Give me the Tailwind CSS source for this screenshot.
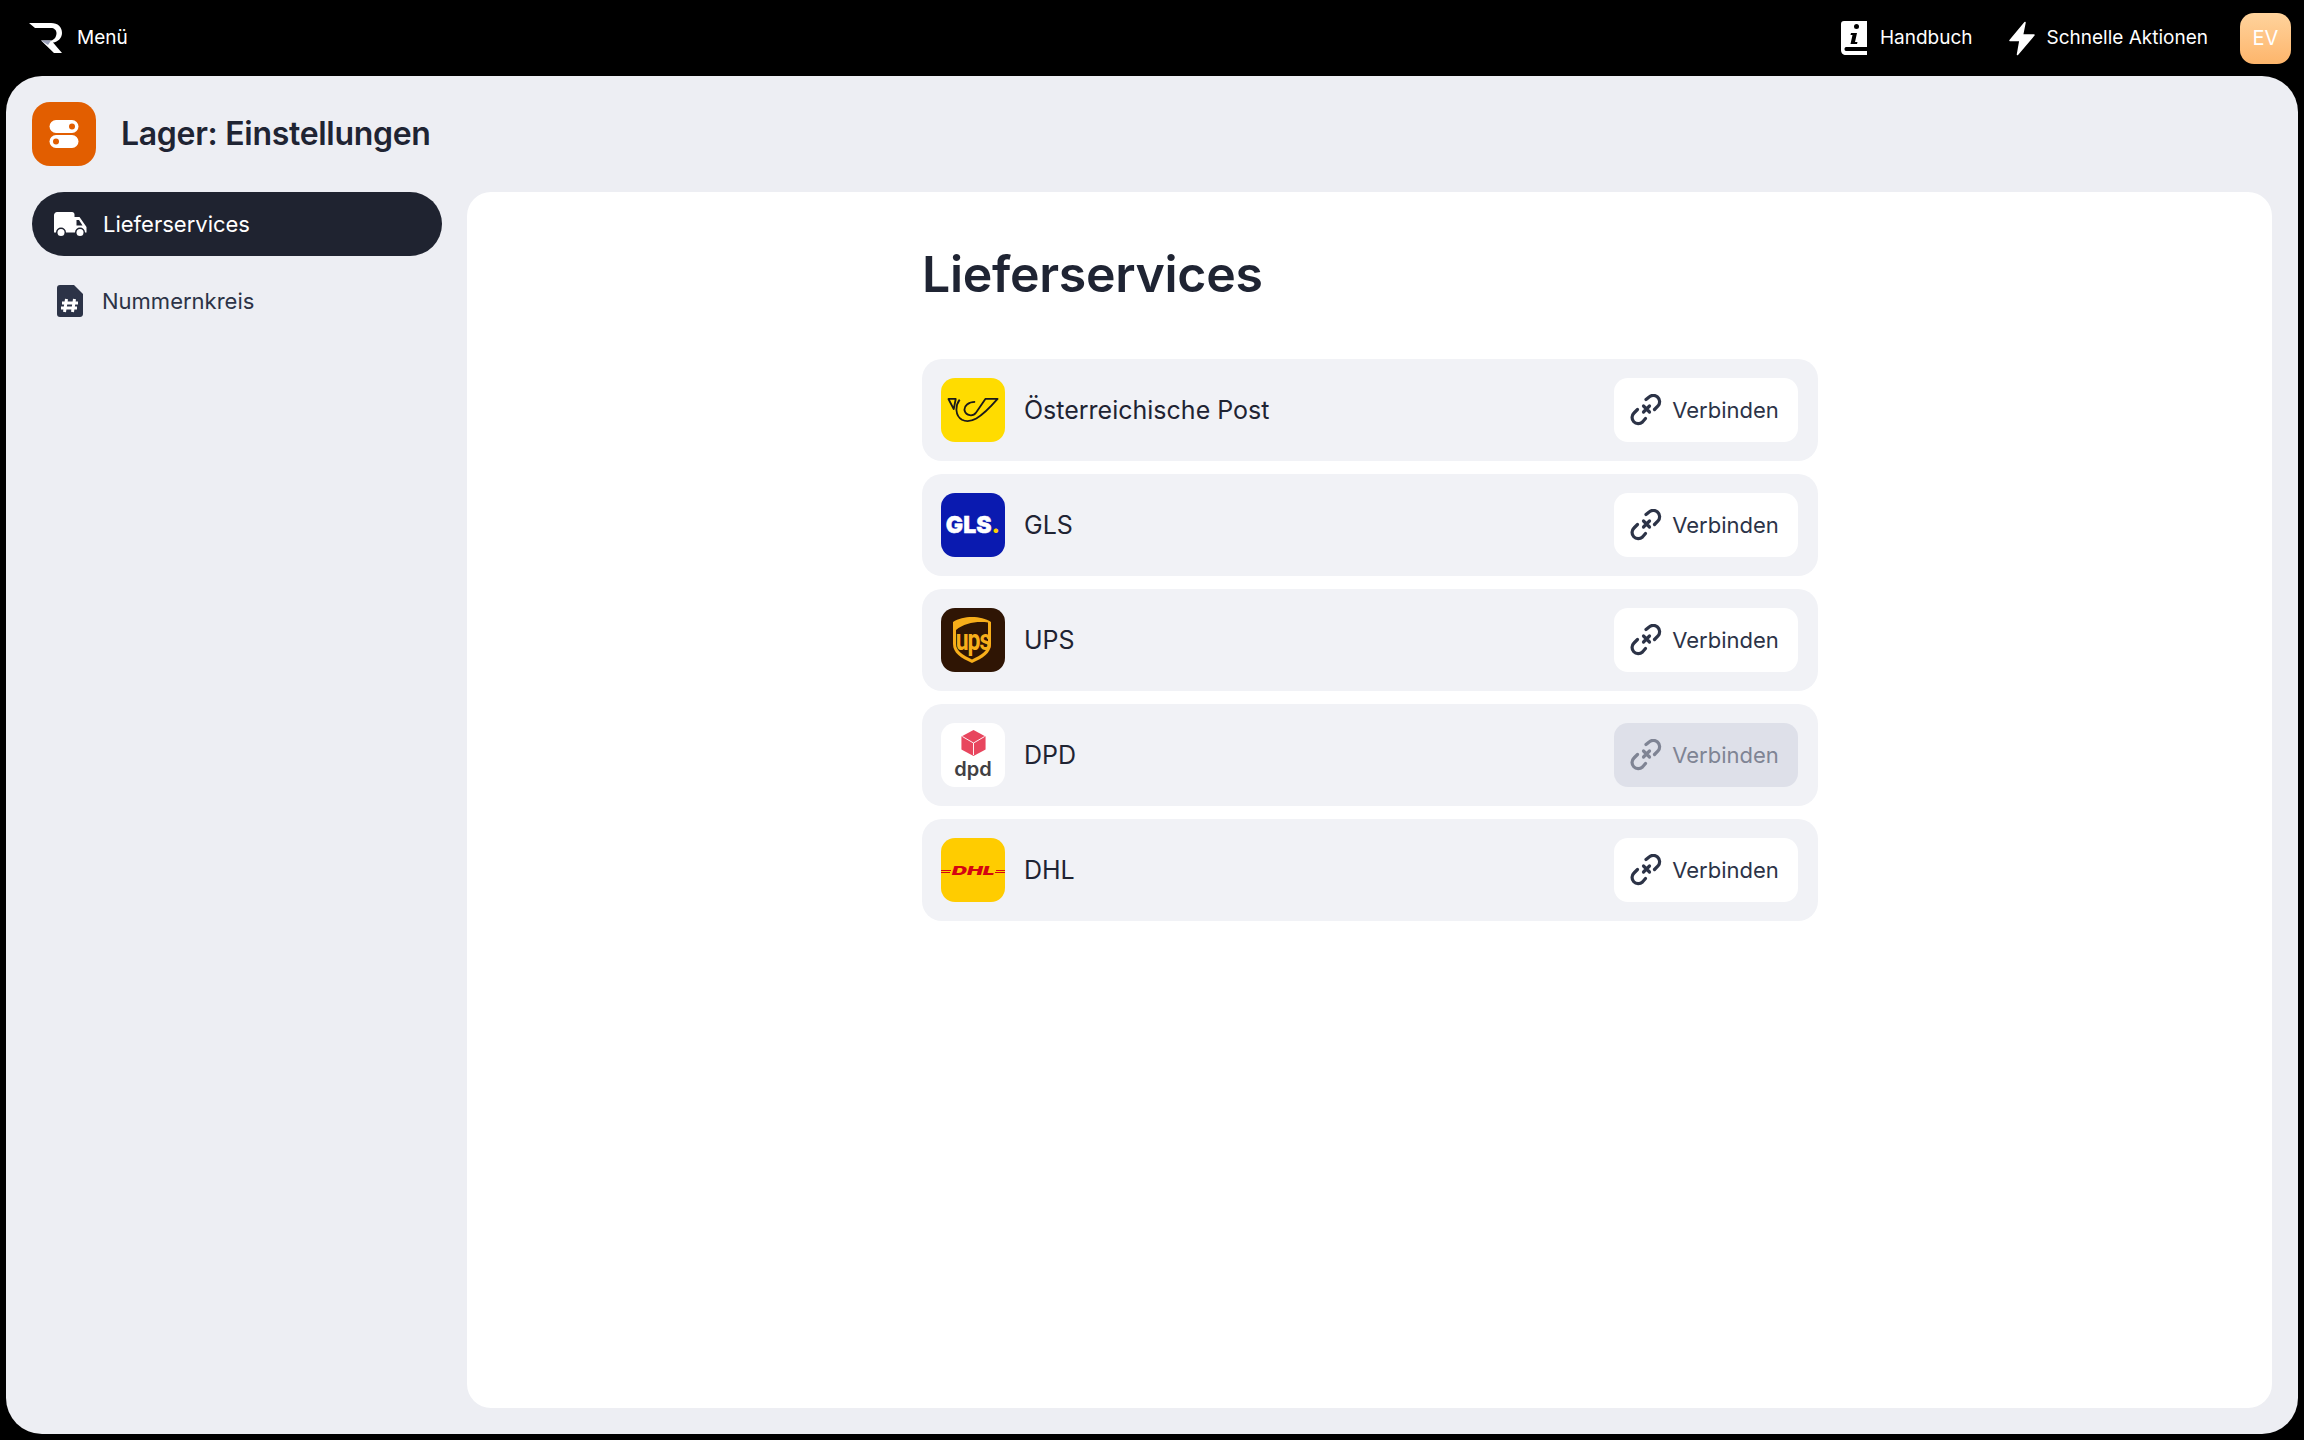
<!DOCTYPE html>
<html lang="de">
<head>
  <meta charset="UTF-8" />
  <title>Lager: Einstellungen</title>
  <script src="https://cdn.jsdelivr.net/npm/@tailwindcss/browser@4"></script>
</head>
<body class="bg-black h-screen flex flex-col font-['Inter',sans-serif] text-[#1f2433] overflow-hidden">

  <!-- top bar -->
  <header class="h-[76px] shrink-0 flex items-center justify-between pl-[29px] pr-[13px] text-white text-[19px]">
    <div class="flex items-center gap-[15px]">
      <svg class="w-[33px] h-[32px]" viewBox="0 0 33 32">
        <path d="M0 1H22C29 1 33 5 33 11C33 16 29 20 24 20.500L33 31H25L12 18.500H22C25.500 18 27.500 14.500 27.500 11C27.500 8 25 6 22 6H6Z" fill="#fff"/>
        <path d="M12 18.500H22L19 23Z" fill="#9aa0b8"/>
      </svg>
      <span class="mt-[1px]">Menü</span>
    </div>
    <div class="flex items-center">
      <svg class="w-[26px] h-[34px] mr-[13px]" viewBox="0 0 26 34">
        <path d="M3 0H26V26H5C3 26 3 30 5 30H26V34H5C2 34 0 32 0 29V3C0 1 1 0 3 0Z" fill="#fff"/>
        <circle cx="15.500" cy="5.500" r="2.500" fill="#000"/>
        <path d="M10 12H16L14 21H16.500L16 23H9.500L11.500 14H9.500Z" fill="#000"/>
      </svg>
      <span class="mt-[1px]">Handbuch</span>
      <svg class="w-[26px] h-[35px] ml-[36px] mr-[12px]" viewBox="0 0 26 35">
        <path d="M16 1.500L1 19.500H11L8.500 33.500L25 14H13.500Z" fill="#fff" stroke="#fff" stroke-width="1.500" stroke-linejoin="round"/>
      </svg>
      <span class="mt-[1px]">Schnelle Aktionen</span>
      <div class="ml-[32px] w-[51px] h-[51px] rounded-[14px] bg-gradient-to-b from-[#ffd39c] to-[#fdb56b] flex items-center justify-center text-[20px]">EV</div>
    </div>
  </header>

  <div class="flex-1 min-h-0 mx-[6px] mb-[6px] rounded-[36px] bg-[#edeef3] p-[26px] flex flex-col">
    <div class="flex items-center gap-[25px] h-[64px] shrink-0">
      <div class="w-[64px] h-[64px] rounded-[18px] bg-[#e25e00] flex items-center justify-center">
        <svg class="w-[30px] h-[30px]" viewBox="0 0 30 30">
          <rect x="0.500" y="1" width="29" height="13" rx="6.500" fill="#fff"/>
          <rect x="0.500" y="16" width="29" height="13" rx="6.500" fill="#fff"/>
          <circle cx="23" cy="7.500" r="3" fill="#e25e00"/>
          <circle cx="7" cy="22.500" r="3" fill="#e25e00"/>
        </svg>
      </div>
      <h1 class="text-[32px] font-semibold tracking-[-0.3px]">Lager: Einstellungen</h1>
    </div>

    <div class="flex-1 min-h-0 mt-[26px] flex gap-[25px]">
      <!-- sidebar -->
      <nav class="w-[410px] shrink-0 flex flex-col gap-[13px] text-[22px]">
        <a class="h-[64px] rounded-full bg-[#1f2330] text-white flex items-center pl-[22px]">
          <svg class="w-[33px] h-[25px] mr-[16px]" viewBox="0 0 33 25">
            <path d="M3 0H18C19.500 0 20.500 1 20.500 2.500V5H25.500L32.500 15V20.500H31A5 5 0 0 0 21 20.500H12A5 5 0 0 0 2 20.500H0V3C0 1.500 1.500 0 3 0Z" fill="#fff"/>
            <path d="M22.500 8H25L28.500 13.500H22.500Z" fill="#1f2330"/>
            <circle cx="7" cy="20.500" r="3.500" fill="#fff"/>
            <circle cx="26" cy="20.500" r="3.500" fill="#fff"/>
          </svg>
          <span>Lieferservices</span>
        </a>
        <a class="h-[64px] flex items-center pl-[25px]">
          <svg class="w-[26px] h-[32px] mr-[19px]" viewBox="0 0 26 32">
            <path d="M3 0H17L26 9V29C26 31 24.500 32 23 32H3C1 32 0 31 0 29V3C0 1 1 0 3 0Z" fill="#2c3347"/>
            <path d="M9.500 14L7.500 27M17.500 14L15.500 27M5 18H21M4 23H20" stroke="#fff" stroke-width="3" fill="none"/>
          </svg>
          <span class="text-[#2c3347]">Nummernkreis</span>
        </a>
      </nav>

      <!-- content card -->
      <main class="flex-1 min-w-0 rounded-[24px] bg-white pl-[455px]">
        <div class="w-[896px]">
          <h2 class="text-[50px] font-semibold leading-[64px] mt-[50px] mb-[53px] tracking-[-0.3px]">Lieferservices</h2>
          <div class="flex flex-col gap-[13px]">

            <div class="h-[102px] rounded-[20px] bg-[#f1f2f6] flex items-center pl-[19px] pr-[20px]">
              <div class="w-[64px] h-[64px] rounded-[14px] bg-[#ffdc00] flex items-center justify-center">
                <svg class="w-[53px] h-[28px]" viewBox="80 120 160 85" fill="none" stroke="#1a1a1a" stroke-width="5.500" stroke-linejoin="round">
                  <path d="M84 129H106L100 160Z"/>
                  <path d="M118 131C104 150 104 180 125 192C150 205 180 190 233 129H196L168 170C158 184 138 180 133 165C130 150 145 138 165 138"/>
                </svg>
              </div>
              <span class="ml-[19px] mt-[1px] text-[25px]">Österreichische Post</span>
              <button class="ml-auto w-[184px] h-[64px] pr-[3px] rounded-[14px] bg-white flex items-center justify-center gap-[10px] text-[22px] text-[#2c3347]">
                <svg class="w-[32px] h-[32px]" viewBox="0 0 32 32" fill="none" stroke="#2c3347" stroke-width="3.200" stroke-linecap="round">
                  <path d="M16 5.500L18.500 3.500A6 6 0 0 1 28 12L24.500 15.500"/>
                  <path d="M7.500 15.500L4 19A6 6 0 0 0 12.500 28L15.500 24.500"/>
                  <path d="M13.500 12L19.500 18M19.500 12L13.500 18"/>
                </svg>
                Verbinden
              </button>
            </div>

            <div class="h-[102px] rounded-[20px] bg-[#f1f2f6] flex items-center pl-[19px] pr-[20px]">
              <div class="w-[64px] h-[64px] rounded-[14px] bg-[#0a1ab0] flex items-center justify-center text-white text-[23px] font-black [-webkit-text-stroke:0.4px_white]">GLS<span class="text-[#ffd200] [-webkit-text-stroke:0px]">.</span></div>
              <span class="ml-[19px] mt-[1px] text-[25px]">GLS</span>
              <button class="ml-auto w-[184px] h-[64px] pr-[3px] rounded-[14px] bg-white flex items-center justify-center gap-[10px] text-[22px] text-[#2c3347]">
                <svg class="w-[32px] h-[32px]" viewBox="0 0 32 32" fill="none" stroke="#2c3347" stroke-width="3.200" stroke-linecap="round">
                  <path d="M16 5.500L18.500 3.500A6 6 0 0 1 28 12L24.500 15.500"/>
                  <path d="M7.500 15.500L4 19A6 6 0 0 0 12.500 28L15.500 24.500"/>
                  <path d="M13.500 12L19.500 18M19.500 12L13.500 18"/>
                </svg>
                Verbinden
              </button>
            </div>

            <div class="h-[102px] rounded-[20px] bg-[#f1f2f6] flex items-center pl-[19px] pr-[20px]">
              <div class="relative w-[64px] h-[64px] rounded-[14px] bg-[#2f1504] flex items-center justify-center">
                <svg class="absolute left-[12px] top-[9px] w-[38px] h-[46px]" viewBox="0 0 38 46">
                  <path d="M19 0C12 0 5 1.500 0 5V27C0 36 8 41 19 46C30 41 38 36 38 27V5C33 1.500 26 0 19 0Z" fill="#f7ae1a"/>
                  <path d="M3 13C11 6 24 4 35 5.500V27C35 34 28 38 19 42.500C10 38 3 34 3 27Z" fill="#2f1504"/>
                </svg>
                <span class="relative mt-[2px] text-[#f7ae1a] text-[23px] leading-[20px] font-bold tracking-[-1px] scale-y-[1.3] font-['Roboto',sans-serif]">ups</span>
              </div>
              <span class="ml-[19px] mt-[1px] text-[25px]">UPS</span>
              <button class="ml-auto w-[184px] h-[64px] pr-[3px] rounded-[14px] bg-white flex items-center justify-center gap-[10px] text-[22px] text-[#2c3347]">
                <svg class="w-[32px] h-[32px]" viewBox="0 0 32 32" fill="none" stroke="#2c3347" stroke-width="3.200" stroke-linecap="round">
                  <path d="M16 5.500L18.500 3.500A6 6 0 0 1 28 12L24.500 15.500"/>
                  <path d="M7.500 15.500L4 19A6 6 0 0 0 12.500 28L15.500 24.500"/>
                  <path d="M13.500 12L19.500 18M19.500 12L13.500 18"/>
                </svg>
                Verbinden
              </button>
            </div>

            <div class="h-[102px] rounded-[20px] bg-[#f1f2f6] flex items-center pl-[19px] pr-[20px]">
              <div class="w-[64px] h-[64px] rounded-[14px] bg-white flex flex-col items-center pt-[7px]">
                <svg class="w-[25px] h-[26px]" viewBox="0 0 26 28">
                  <path d="M13 0L26 7V21L13 28L0 21V7Z" fill="#e8465e"/>
                  <path d="M1 7L13 14V27M25 7L13 14" fill="none" stroke="#fff" stroke-width="1"/>
                </svg>
                <span class="text-[#414042] text-[20px] font-semibold leading-[20px] mt-[3px]">dpd</span>
              </div>
              <span class="ml-[19px] mt-[1px] text-[25px]">DPD</span>
              <button class="ml-auto w-[184px] h-[64px] pr-[3px] rounded-[14px] bg-[#dee0e9] flex items-center justify-center gap-[10px] text-[22px] text-[#7f8494]" disabled>
                <svg class="w-[32px] h-[32px]" viewBox="0 0 32 32" fill="none" stroke="#7f8494" stroke-width="3.200" stroke-linecap="round">
                  <path d="M16 5.500L18.500 3.500A6 6 0 0 1 28 12L24.500 15.500"/>
                  <path d="M7.500 15.500L4 19A6 6 0 0 0 12.500 28L15.500 24.500"/>
                  <path d="M13.500 12L19.500 18M19.500 12L13.500 18"/>
                </svg>
                Verbinden
              </button>
            </div>

            <div class="h-[102px] rounded-[20px] bg-[#f1f2f6] flex items-center pl-[19px] pr-[20px]">
              <div class="relative w-[64px] h-[64px] rounded-[14px] bg-[#ffcc00] flex items-center justify-center overflow-hidden">
                <div class="absolute left-0 w-[10px] top-[32px] h-[1px] bg-[#d40511]"></div>
                <div class="absolute left-0 w-[9px] top-[34px] h-[1px] bg-[#d40511]"></div>
                <div class="absolute right-0 w-[9px] top-[32px] h-[1px] bg-[#d40511]"></div>
                <div class="absolute right-0 w-[10px] top-[34px] h-[1px] bg-[#d40511]"></div>
                <span class="relative mt-[2px] text-[#d40511] text-[12px] leading-[10px] font-black italic scale-x-[1.75]">DHL</span>
              </div>
              <span class="ml-[19px] mt-[1px] text-[25px]">DHL</span>
              <button class="ml-auto w-[184px] h-[64px] pr-[3px] rounded-[14px] bg-white flex items-center justify-center gap-[10px] text-[22px] text-[#2c3347]">
                <svg class="w-[32px] h-[32px]" viewBox="0 0 32 32" fill="none" stroke="#2c3347" stroke-width="3.200" stroke-linecap="round">
                  <path d="M16 5.500L18.500 3.500A6 6 0 0 1 28 12L24.500 15.500"/>
                  <path d="M7.500 15.500L4 19A6 6 0 0 0 12.500 28L15.500 24.500"/>
                  <path d="M13.500 12L19.500 18M19.500 12L13.500 18"/>
                </svg>
                Verbinden
              </button>
            </div>

          </div>
        </div>
      </main>
    </div>
  </div>

</body>
</html>
